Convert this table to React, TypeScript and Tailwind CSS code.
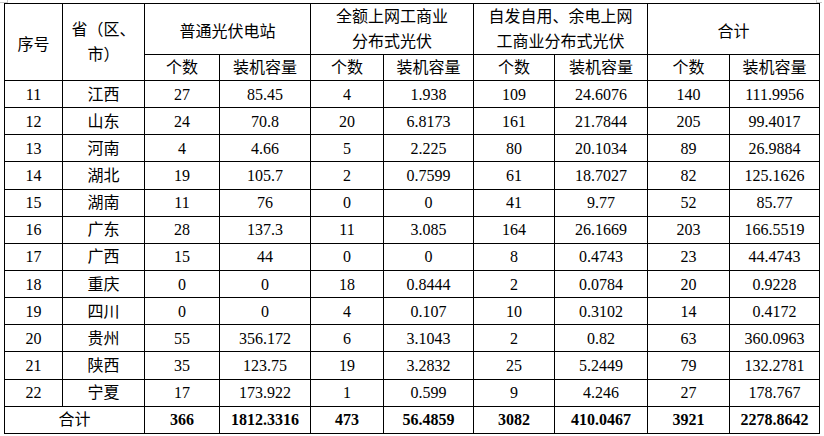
const rows: [string, string, string, string, string, string, string, string, string, string][] = [
  ['11', '江西', '27', '85.45', '4', '1.938', '109', '24.6076', '140', '111.9956'],
  ['12', '山东', '24', '70.8', '20', '6.8173', '161', '21.7844', '205', '99.4017'],
  ['13', '河南', '4', '4.66', '5', '2.225', '80', '20.1034', '89', '26.9884'],
  ['14', '湖北', '19', '105.7', '2', '0.7599', '61', '18.7027', '82', '125.1626'],
  ['15', '湖南', '11', '76', '0', '0', '41', '9.77', '52', '85.77'],
  ['16', '广东', '28', '137.3', '11', '3.085', '164', '26.1669', '203', '166.5519'],
  ['17', '广西', '15', '44', '0', '0', '8', '0.4743', '23', '44.4743'],
  ['18', '重庆', '0', '0', '18', '0.8444', '2', '0.0784', '20', '0.9228'],
  ['19', '四川', '0', '0', '4', '0.107', '10', '0.3102', '14', '0.4172'],
  ['20', '贵州', '55', '356.172', '6', '3.1043', '2', '0.82', '63', '360.0963'],
  ['21', '陕西', '35', '123.75', '19', '3.2832', '25', '5.2449', '79', '132.2781'],
  ['22', '宁夏', '17', '173.922', '1', '0.599', '9', '4.246', '27', '178.767'],
];

const totals = ['366', '1812.3316', '473', '56.4859', '3082', '410.0467', '3921', '2278.8642'];

const widths = [58, 82, 75, 91, 73, 90, 81, 93, 82, 90];

const cell = 'border border-black text-center align-middle p-0';

export default function App() {
  return (
    <div
      className="w-[824px] h-[436px] bg-white text-black"
      style={{ fontFamily: '"Liberation Serif", "Noto Sans CJK SC", serif' }}
    >
      {/* page corner marks */}
      <div className="flex justify-between h-[3px]">
        <span className="w-[8px] h-[3px] border-r border-b border-[#c8c8c8]" />
        <span className="w-[6px] h-[3px] mr-[2px] border-l border-b border-[#c8c8c8]" />
      </div>
      <table className="ml-[4px] w-[815px] table-fixed border-collapse text-[16px] leading-[25px]">
        <colgroup>
          {widths.map((w, i) => (
            <col key={i} style={{ width: w }} />
          ))}
        </colgroup>
        <thead>
          <tr className="h-[49px]">
            <th rowSpan={2} className={`${cell} font-normal pt-[4px]`}>序号</th>
            <th rowSpan={2} className={`${cell} font-normal`}>
              省（区、
              <br />
              市）
            </th>
            <th colSpan={2} className={`${cell} font-normal pt-[4px]`}>普通光伏电站</th>
            <th colSpan={2} className={`${cell} font-normal`}>
              全额上网工商业
              <br />
              分布式光伏
            </th>
            <th colSpan={2} className={`${cell} font-normal`}>
              自发自用、余电上网
              <br />
              工商业分布式光伏
            </th>
            <th colSpan={2} className={`${cell} font-normal pt-[4px]`}>合计</th>
          </tr>
          <tr className="h-[26px]">
            {['个数', '装机容量', '个数', '装机容量', '个数', '装机容量', '个数', '装机容量'].map((t, i) => (
              <th key={i} className={`${cell} font-normal`}>{t}</th>
            ))}
          </tr>
        </thead>
        <tbody>
          {rows.map((r) => (
            <tr key={r[0]} className="h-[27.15px]">
              {r.map((v, i) => (
                <td key={i} className={cell}>{v}</td>
              ))}
            </tr>
          ))}
          <tr className="h-[27.15px]">
            <td colSpan={2} className={cell}>合计</td>
            {totals.map((v, i) => (
              <td key={i} className={`${cell} font-bold`}>{v}</td>
            ))}
          </tr>
        </tbody>
      </table>
    </div>
  );
}
